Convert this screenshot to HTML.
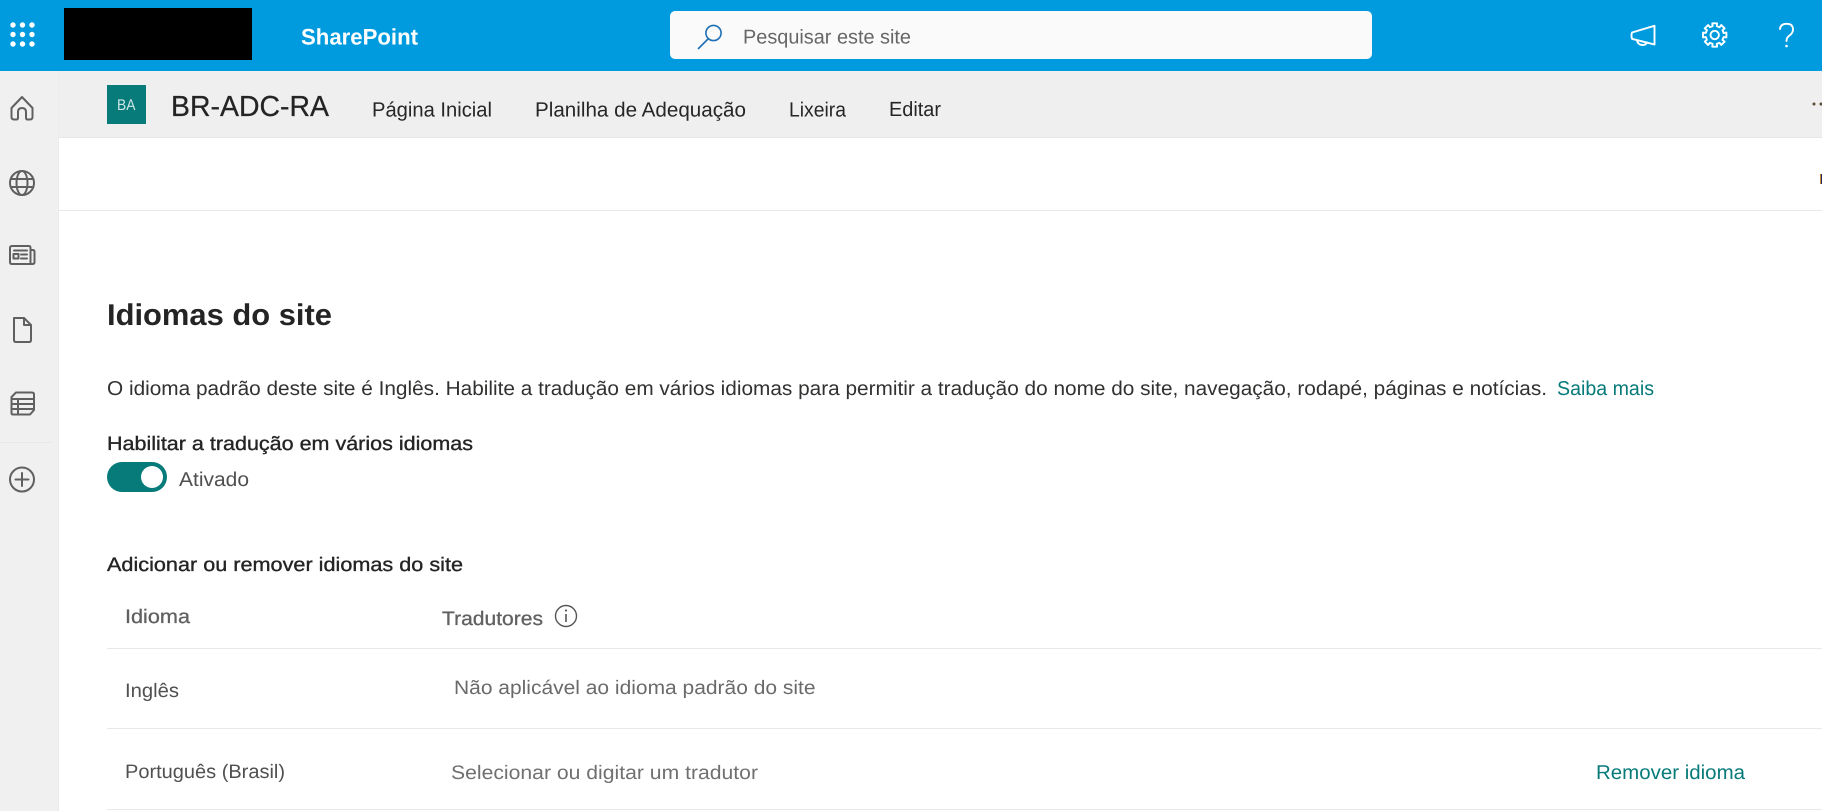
<!DOCTYPE html>
<html lang="pt-BR">
<head>
<meta charset="utf-8">
<title>Idiomas do site</title>
<style>
html,body{margin:0;padding:0;width:1822px;height:811px;overflow:hidden;background:#fff}
svg{display:block;position:absolute;left:0;top:0}
text{font-family:"Liberation Sans",sans-serif;text-rendering:geometricPrecision}
</style>
</head>
<body>
<svg width="1822" height="811" viewBox="0 0 1822 811" xmlns="http://www.w3.org/2000/svg">
  <rect width="1822" height="811" fill="#fff"/>
  <!-- sidebar -->
  <rect x="0" y="71" width="59" height="740" fill="#f0f0f0"/>
  <rect x="58" y="71" width="1" height="740" fill="#ebebeb"/>
  <rect x="0" y="442" width="52" height="1" fill="#e8e8e8"/>
  <!-- nav band -->
  <rect x="59" y="71" width="1763" height="66" fill="#efefef"/>
  <rect x="59" y="137" width="1763" height="1" fill="#e6e6e6"/>
  <rect x="59" y="210" width="1763" height="1" fill="#e8e8e8"/>
  <!-- top bar -->
  <rect x="0" y="0" width="1822" height="71" fill="#009bdf"/>
  <g fill="#fff">
    <circle cx="13" cy="25" r="2.7"/><circle cx="22.5" cy="25" r="2.7"/><circle cx="32" cy="25" r="2.7"/>
    <circle cx="13" cy="34.5" r="2.7"/><circle cx="22.5" cy="34.5" r="2.7"/><circle cx="32" cy="34.5" r="2.7"/>
    <circle cx="13" cy="44" r="2.7"/><circle cx="22.5" cy="44" r="2.7"/><circle cx="32" cy="44" r="2.7"/>
  </g>
  <rect x="64" y="8" width="188" height="52" fill="#000"/>
  <text x="301" y="44.5" font-size="22.5" font-weight="bold" fill="#fff" textLength="117" lengthAdjust="spacingAndGlyphs">SharePoint</text>
  <!-- search -->
  <rect x="670" y="11" width="702" height="48" rx="5" fill="#fafafa"/>
  <g fill="none" stroke="#1f6fb5" stroke-width="1.6">
    <circle cx="713.5" cy="33" r="7.6"/>
    <path d="M708 39 L698 49"/>
  </g>
  <text x="743" y="43.5" font-size="20" fill="#666" textLength="168" lengthAdjust="spacingAndGlyphs">Pesquisar este site</text>
  <!-- top right icons -->
  <g fill="none" stroke="#fff" stroke-width="1.9" stroke-linejoin="round" stroke-linecap="round">
    <path d="M1632 32.5 L1654.5 25.8 L1654.5 44.5 L1632 38.8 Q1631 35.5 1632 32.5 Z"/>
    <path d="M1637 40.5 Q1638 45 1642.5 45 Q1646 45 1647 42.5"/>
    <g transform="translate(1714.7 35)">
      <circle r="4.2"/>
      <path id="gt" d="M-2.1 -8.9 L-2.4 -11.7 L2.4 -11.700 L2.1 -8.9 L4.8 -7.8"/>
      <path transform="rotate(45)" d="M-2.1 -8.9 L-2.4 -11.7 L2.4 -11.700 L2.1 -8.9 L4.8 -7.8"/>
      <path transform="rotate(90)" d="M-2.1 -8.9 L-2.4 -11.7 L2.4 -11.700 L2.1 -8.9 L4.8 -7.8"/>
      <path transform="rotate(135)" d="M-2.1 -8.9 L-2.4 -11.7 L2.4 -11.700 L2.1 -8.9 L4.8 -7.8"/>
      <path transform="rotate(180)" d="M-2.1 -8.9 L-2.4 -11.7 L2.4 -11.700 L2.1 -8.9 L4.8 -7.8"/>
      <path transform="rotate(225)" d="M-2.1 -8.9 L-2.4 -11.7 L2.4 -11.700 L2.1 -8.9 L4.8 -7.8"/>
      <path transform="rotate(270)" d="M-2.1 -8.9 L-2.4 -11.7 L2.4 -11.700 L2.1 -8.9 L4.8 -7.8"/>
      <path transform="rotate(315)" d="M-2.1 -8.9 L-2.4 -11.7 L2.4 -11.700 L2.1 -8.9 L4.8 -7.8"/>
    </g>
    <path d="M1780 29 Q1780.5 23.8 1786.5 23.8 Q1793 23.8 1793 29.5 Q1793 33 1789.5 35.5 Q1786.5 37.5 1786.5 41"/>
  </g>
  <circle cx="1786.5" cy="46" r="1.3" fill="#fff"/>
  <!-- site header -->
  <rect x="107" y="85" width="39" height="39" fill="#077a7a"/>
  <text x="117" y="110" font-size="15.5" fill="#cfe6e6" textLength="18.5" lengthAdjust="spacingAndGlyphs">BA</text>
  <text x="171" y="116" font-size="29" fill="#242424" stroke="#242424" stroke-width="0.25" textLength="158" lengthAdjust="spacingAndGlyphs">BR-ADC-RA</text>
  <g font-size="20.5" fill="#262626">
    <text x="372" y="116.5" textLength="120" lengthAdjust="spacingAndGlyphs">Página Inicial</text>
    <text x="535" y="116.5" textLength="211" lengthAdjust="spacingAndGlyphs">Planilha de Adequação</text>
    <text x="789" y="116.5" textLength="57" lengthAdjust="spacingAndGlyphs">Lixeira</text>
    <text x="889" y="116" textLength="52" lengthAdjust="spacingAndGlyphs">Editar</text>
  </g>
  <circle cx="1814" cy="104" r="1.5" fill="#5a4a3a"/>
  <circle cx="1821" cy="104" r="1.5" fill="#5a4a3a"/>
  <rect x="1820" y="174" width="1" height="10" fill="#c98a30"/>
  <rect x="1821" y="174" width="1" height="10" fill="#2a2a60"/>
  <!-- sidebar icons -->
  <g fill="none" stroke="#606060" stroke-width="2" stroke-linejoin="round" stroke-linecap="round">
    <path d="M11.500 108 L22 97 L32.500 108 L32.500 117 Q32.500 119.500 30 119.500 L27.500 119.500 Q26 119.500 26 117.500 L26 112 Q26 108 22 108 Q18 108 18 112 L18 117.500 Q18 119.500 16.500 119.500 L14 119.500 Q11.500 119.500 11.500 117 Z"/>
    <circle cx="22" cy="183" r="12"/>
    <ellipse cx="22" cy="183" rx="5.5" ry="12"/>
    <path d="M11 179 L33 179 M11 187 L33 187"/>
    <path d="M10 248 Q10 246 12 246 L29 246 Q30.5 246 30.5 248 L30.5 264 L12 264 Q10 264 10 262 Z"/>
    <path d="M30.5 250 L33 250 Q34.5 250 34.5 252 L34.5 262 Q34.5 264 32.5 264 L30.5 264"/>
    <rect x="13.5" y="254" width="5" height="4.5"/>
    <path d="M14 250.5 L27 250.5 M21 254.5 L27 254.5 M21 258.5 L27 258.5"/>
    <path d="M14 318 L24 318 L31 325 L31 340 Q31 342 29 342 L16 342 Q14 342 14 340 Z"/>
    <path d="M24 318 L24 325 L31 325"/>
    <path d="M16 392.5 L32 392.5 Q34 392.5 34 394.5 L34 410 L30 414.5 L13 414.5 Q11.5 414.5 11.5 413 L11.5 397 Z"/>
    <path d="M11.5 399 L34 399 M11.5 404 L34 404 M11.5 409 L34 409 M18 399 L18 414"/>
    <circle cx="22" cy="479.500" r="12"/>
    <path d="M22 473 L22 486 M15.500 479.500 L28.500 479.500"/>
  </g>
  <!-- content -->
  <text x="107" y="325" font-size="30" font-weight="bold" fill="#242424" textLength="225" lengthAdjust="spacingAndGlyphs">Idiomas do site</text>
  <text x="107" y="395" font-size="20" fill="#323130" textLength="1440" lengthAdjust="spacingAndGlyphs">O idioma padrão deste site é Inglês. Habilite a tradução em vários idiomas para permitir a tradução do nome do site, navegação, rodapé, páginas e notícias.</text>
  <text x="1557" y="395" font-size="20" fill="#077a7a" textLength="97" lengthAdjust="spacingAndGlyphs">Saiba mais</text>
  <text x="107" y="450" font-size="19.5" fill="#242424" stroke="#242424" stroke-width="0.35" textLength="366" lengthAdjust="spacingAndGlyphs">Habilitar a tradução em vários idiomas</text>
  <rect x="107" y="462" width="60" height="30" rx="15" fill="#077a7a"/>
  <circle cx="152" cy="477" r="11" fill="#fff"/>
  <text x="179" y="486" font-size="20" fill="#505050" textLength="70" lengthAdjust="spacingAndGlyphs">Ativado</text>
  <text x="107" y="571" font-size="19.5" fill="#242424" stroke="#242424" stroke-width="0.35" textLength="356" lengthAdjust="spacingAndGlyphs">Adicionar ou remover idiomas do site</text>
  <text x="125" y="623" font-size="19.5" fill="#616161" stroke="#616161" stroke-width="0.3" textLength="65" lengthAdjust="spacingAndGlyphs">Idioma</text>
  <text x="442" y="625" font-size="19.5" fill="#616161" stroke="#616161" stroke-width="0.3" textLength="101" lengthAdjust="spacingAndGlyphs">Tradutores</text>
  <circle cx="566" cy="616" r="10.500" fill="none" stroke="#555" stroke-width="1.4"/>
  <rect x="565.200" y="614" width="1.6" height="8" fill="#555"/>
  <circle cx="566" cy="610.500" r="1.1" fill="#555"/>
  <rect x="107" y="648" width="1715" height="1" fill="#e8e8e8"/>
  <text x="125" y="697" font-size="19.500" fill="#505050" textLength="54" lengthAdjust="spacingAndGlyphs">Inglês</text>
  <text x="454" y="694" font-size="19.500" fill="#6a6a6a" textLength="361.500" lengthAdjust="spacingAndGlyphs">Não aplicável ao idioma padrão do site</text>
  <rect x="107" y="728" width="1715" height="1" fill="#e8e8e8"/>
  <text x="125" y="778" font-size="19.500" fill="#505050" textLength="160" lengthAdjust="spacingAndGlyphs">Português (Brasil)</text>
  <text x="451" y="779" font-size="19.500" fill="#707070" textLength="307" lengthAdjust="spacingAndGlyphs">Selecionar ou digitar um tradutor</text>
  <text x="1596" y="779" font-size="20" fill="#077a7a" textLength="149" lengthAdjust="spacingAndGlyphs">Remover idioma</text>
  <rect x="107" y="809" width="1715" height="1" fill="#e8e8e8"/>
</svg>
</body>
</html>
